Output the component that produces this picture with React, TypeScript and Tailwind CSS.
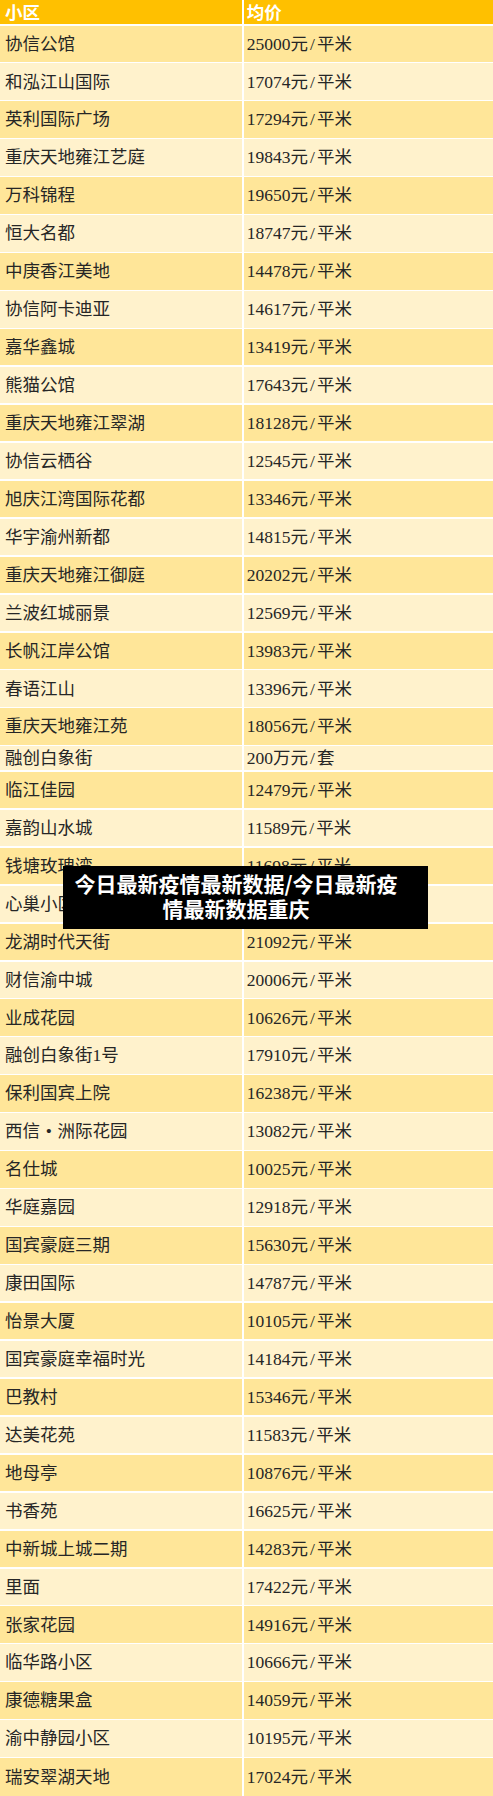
import React from "react";

const rows: [string, string][] = [
  ["协信公馆", "25000元/平米"],
  ["和泓江山国际", "17074元/平米"],
  ["英利国际广场", "17294元/平米"],
  ["重庆天地雍江艺庭", "19843元/平米"],
  ["万科锦程", "19650元/平米"],
  ["恒大名都", "18747元/平米"],
  ["中庚香江美地", "14478元/平米"],
  ["协信阿卡迪亚", "14617元/平米"],
  ["嘉华鑫城", "13419元/平米"],
  ["熊猫公馆", "17643元/平米"],
  ["重庆天地雍江翠湖", "18128元/平米"],
  ["协信云栖谷", "12545元/平米"],
  ["旭庆江湾国际花都", "13346元/平米"],
  ["华宇渝州新都", "14815元/平米"],
  ["重庆天地雍江御庭", "20202元/平米"],
  ["兰波红城丽景", "12569元/平米"],
  ["长帆江岸公馆", "13983元/平米"],
  ["春语江山", "13396元/平米"],
  ["重庆天地雍江苑", "18056元/平米"],
  ["融创白象街", "200万元/套"],
  ["临江佳园", "12479元/平米"],
  ["嘉韵山水城", "11589元/平米"],
  ["钱塘玫瑰湾", "11698元/平米"],
  ["心巢小区", "12035元/平米"],
  ["龙湖时代天街", "21092元/平米"],
  ["财信渝中城", "20006元/平米"],
  ["业成花园", "10626元/平米"],
  ["融创白象街1号", "17910元/平米"],
  ["保利国宾上院", "16238元/平米"],
  ["西信•洲际花园", "13082元/平米"],
  ["名仕城", "10025元/平米"],
  ["华庭嘉园", "12918元/平米"],
  ["国宾豪庭三期", "15630元/平米"],
  ["康田国际", "14787元/平米"],
  ["怡景大厦", "10105元/平米"],
  ["国宾豪庭幸福时光", "14184元/平米"],
  ["巴教村", "15346元/平米"],
  ["达美花苑", "11583元/平米"],
  ["地母亭", "10876元/平米"],
  ["书香苑", "16625元/平米"],
  ["中新城上城二期", "14283元/平米"],
  ["里面", "17422元/平米"],
  ["张家花园", "14916元/平米"],
  ["临华路小区", "10666元/平米"],
  ["康德糖果盒", "14059元/平米"],
  ["渝中静园小区", "10195元/平米"],
  ["瑞安翠湖天地", "17024元/平米"],
];

function Price({ text }: { text: string }) {
  const parts = text.split("/");
  return (
    <span>
      {parts[0]}
      <span className="inline-block w-[9px] text-center">/</span>
      {parts[1]}
    </span>
  );
}

function Name({ text }: { text: string }) {
  if (!text.includes("•")) return <span>{text}</span>;
  const parts = text.split("•");
  return (
    <span>
      {parts[0]}
      <span className="inline-block w-[17.5px] text-center">•</span>
      {parts[1]}
    </span>
  );
}

export default function App() {
  return (
    <div className="relative w-[493px] h-[1796px] overflow-hidden bg-white font-['Liberation_Serif','Noto_Sans_CJK_SC',serif] text-[17.5px] text-[#262626]">
      <div className="flex h-[24px] bg-[#FFC000] text-white font-bold">
        <div className="w-[242px] pl-[5px] flex items-center pt-[2px]">小区</div>
        <div className="flex-1 border-l-2 border-white pl-[2.7px] flex items-center pt-[2px]">均价</div>
      </div>
      {rows.map(([name, price], i) => {
        const short = i === 19;
        const last = i === rows.length - 1;
        const h = short ? "h-[25.5px]" : last ? "h-[40px]" : "h-[37.94px]";
        const bg = i % 2 === 0 ? "bg-[#FFE699]" : "bg-[#FFF2CC]";
        return (
          <div key={i} className={`${h} pt-[1.5px] bg-white`}>
            <div className={`flex h-full ${bg}`}>
              <div className="w-[242px] pl-[5px] flex items-center whitespace-nowrap">
                <Name text={name} />
              </div>
              <div className="flex-1 border-l-2 border-white pl-[2.7px] flex items-center whitespace-nowrap">
                <Price text={price} />
              </div>
            </div>
          </div>
        );
      })}
      <div className="absolute left-[63px] top-[866px] w-[365px] h-[63px] bg-black">
        <div className="ml-[10px] w-[326px] pt-[5px] text-center text-white font-bold text-[21px] leading-[25px] font-['Noto_Sans_CJK_SC',sans-serif]">
          今日最新疫情最新数据/今日最新疫情最新数据重庆
        </div>
      </div>
    </div>
  );
}
